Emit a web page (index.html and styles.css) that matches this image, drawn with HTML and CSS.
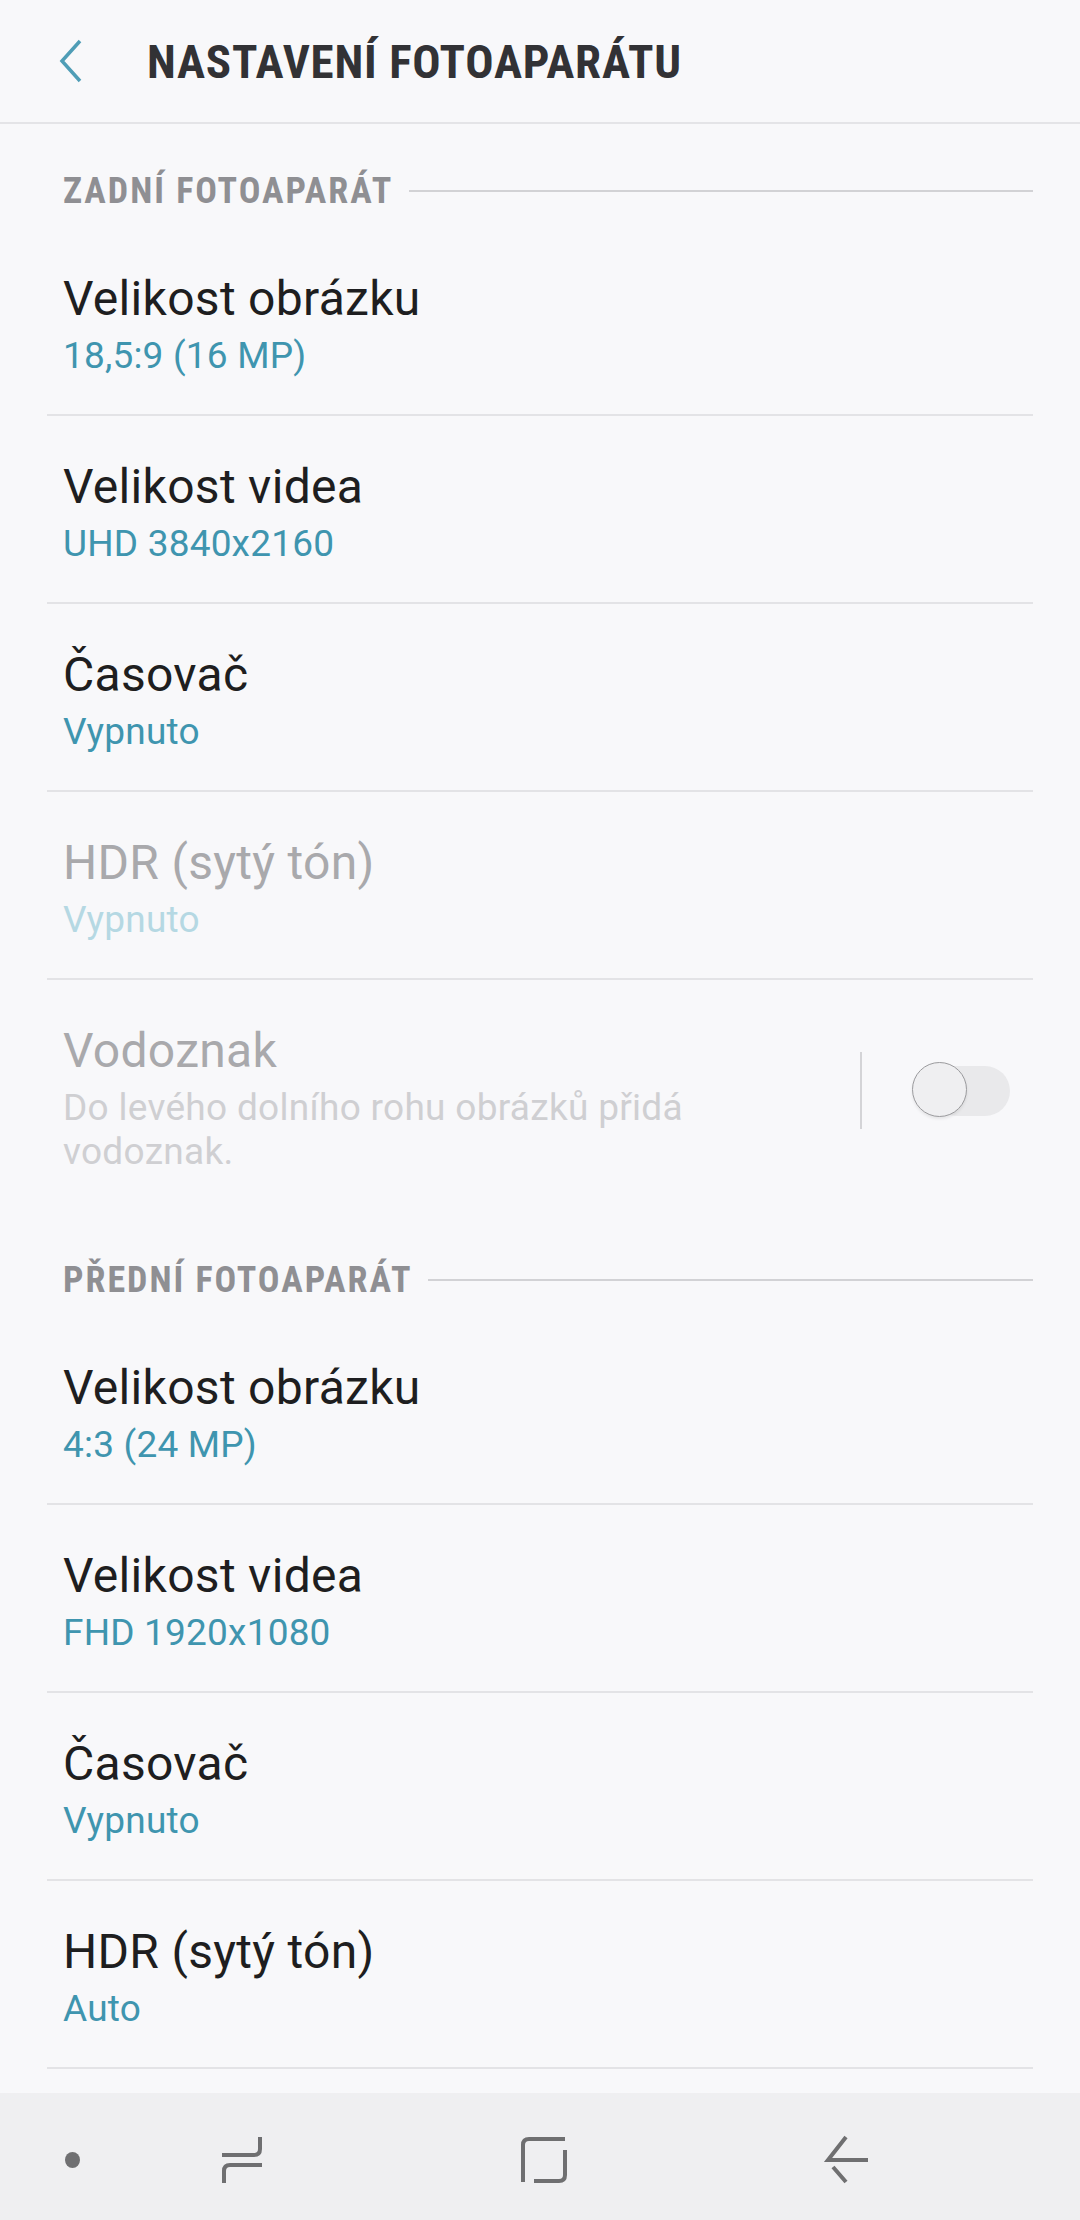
FILE: index.html
```html
<!DOCTYPE html>
<html lang="cs">
<head>
<meta charset="utf-8">
<title>Nastavení fotoaparátu</title>
<link rel="stylesheet" href="styles.css">
</head>
<body>
<div class="screen">
  <header class="appbar">
    <svg class="back" width="30" height="44" viewBox="0 0 30 44"><path d="M24 2 L6 22 L24 42" fill="none" stroke="#4f9db6" stroke-width="3.5"/></svg>
    <h1 class="appbar-title">NASTAVENÍ FOTOAPARÁTU</h1>
  </header>
  <main class="content">
    <div class="section-head"><span class="section-label">ZADNÍ FOTOAPARÁT</span><span class="section-line"></span></div>
    <div class="row"><div class="row-title">Velikost obrázku</div><div class="row-value">18,5:9 (16 MP)</div></div>
    <div class="row"><div class="row-title">Velikost videa</div><div class="row-value">UHD 3840x2160</div></div>
    <div class="row"><div class="row-title">Časovač</div><div class="row-value">Vypnuto</div></div>
    <div class="row disabled"><div class="row-title">HDR (sytý tón)</div><div class="row-value">Vypnuto</div></div>
    <div class="row row-switch disabled last">
      <div class="row-text">
        <div class="row-title">Vodoznak</div>
        <div class="row-desc">Do levého dolního rohu obrázků přidá vodoznak.</div>
      </div>
      <span class="vsep"></span>
      <span class="switch"><span class="track"></span><span class="knob"></span></span>
    </div>
    <div class="section-head"><span class="section-label">PŘEDNÍ FOTOAPARÁT</span><span class="section-line"></span></div>
    <div class="row"><div class="row-title">Velikost obrázku</div><div class="row-value">4:3 (24 MP)</div></div>
    <div class="row"><div class="row-title">Velikost videa</div><div class="row-value">FHD 1920x1080</div></div>
    <div class="row"><div class="row-title">Časovač</div><div class="row-value">Vypnuto</div></div>
    <div class="row"><div class="row-title">HDR (sytý tón)</div><div class="row-value">Auto</div></div>
  </main>
  <nav class="navbar">
    <span class="nav-dot"></span>
    <svg class="nav-icon nav-recent" width="46" height="50" viewBox="0 0 46 50"><path d="M40 2 V14 Q40 20 34 20 H2 M42 30 H10 Q4 30 4 36 V48" fill="none" stroke="#6f6f71" stroke-width="4"/></svg>
    <svg class="nav-icon nav-home" width="50" height="50" viewBox="0 0 50 50"><path d="M3 47 V10 Q3 4 9 4 H45 M45 15 V40 Q45 46 39 46 H14" fill="none" stroke="#6f6f71" stroke-width="4"/></svg>
    <svg class="nav-icon nav-back" width="52" height="50" viewBox="0 0 52 50"><path d="M26 2 L8 25 H48 M13 32 L26 47" fill="none" stroke="#6f6f71" stroke-width="4"/></svg>
  </nav>
</div>
</body>
</html>
```
FILE: styles.css
```css
html, body {
  margin: 0;
  padding: 0;
}
body {
  background: #f8f8fa;
  font-family: Roboto, "Noto Sans", "Liberation Sans", sans-serif;
}
.screen {
  width: 1080px;
  height: 2220px;
  display: flex;
  flex-direction: column;
  overflow: hidden;
}
.appbar {
  height: 122px;
  flex: none;
  display: flex;
  align-items: center;
  border-bottom: 2px solid #e4e4e7;
  box-sizing: content-box;
}
.back {
  margin-left: 56px;
  margin-top: 0;
}
.appbar-title {
  margin: 0 0 0 61px;
  font-size: 47px;
  font-weight: 700;
  font-stretch: 85%;
  color: #323235;
  letter-spacing: 0.8px;
}
.content {
  flex: 1;
  overflow: hidden;
}
.section-head {
  display: flex;
  align-items: center;
  padding: 48px 47px 18px 63px;
  height: 38px;
}
.section-label {
  font-size: 36px;
  font-weight: 700;
  font-stretch: 84%;
  letter-spacing: 2px;
  color: #8f8f93;
  line-height: 38px;
}
.section-line {
  flex: 1;
  height: 2px;
  background: #d2d2d5;
  margin-left: 16px;
}
.row {
  margin: 0 47px;
  padding: 42px 16px 36px 16px;
  border-bottom: 2px solid #e3e3e6;
}
.row.last {
  border-bottom: none;
  padding-bottom: 39px;
}
.row-title {
  font-size: 48px;
  line-height: 58px;
  letter-spacing: 0.3px;
  color: #1e1e20;
}
.row-value {
  font-size: 37px;
  line-height: 44px;
  letter-spacing: 0.2px;
  margin-top: 6px;
  color: #3f95af;
}
.row.disabled .row-title {
  color: #a9a9ac;
}
.row.disabled .row-value {
  color: #b5d8e3;
}
.row-switch {
  display: flex;
  align-items: center;
}
.row-text {
  flex: 1;
  padding-right: 90px;
}
.row-desc {
  font-size: 37px;
  line-height: 44px;
  letter-spacing: 0.3px;
  margin-top: 6px;
  color: #cfcfd2;
}
.vsep {
  width: 2px;
  height: 77px;
  background: #d4d4d7;
  flex: none;
  margin-top: -16px;
}
.switch {
  position: relative;
  width: 98px;
  height: 56px;
  margin-left: 50px;
  margin-right: 7px;
  margin-top: -16px;
  flex: none;
}
.track {
  position: absolute;
  left: 20px;
  right: 0;
  top: 4px;
  height: 50px;
  border-radius: 25px;
  background: #e9e9eb;
}
.knob {
  position: absolute;
  left: 0;
  top: 0;
  width: 53px;
  height: 53px;
  border-radius: 50%;
  background: #efeff1;
  border: 1.5px solid #9b9b9e;
  box-shadow: 0 2px 3px rgba(0,0,0,0.08);
}
.navbar {
  height: 127px;
  flex: none;
  background: #efeff1;
  position: relative;
}
.nav-dot {
  position: absolute;
  left: 65px;
  top: 59px;
  width: 15px;
  height: 16px;
  border-radius: 50%;
  background: #707072;
}
.nav-icon {
  position: absolute;
  top: 42px;
}
.nav-recent { left: 220px; }
.nav-home { left: 520px; }
.nav-back { left: 820px; }
```
